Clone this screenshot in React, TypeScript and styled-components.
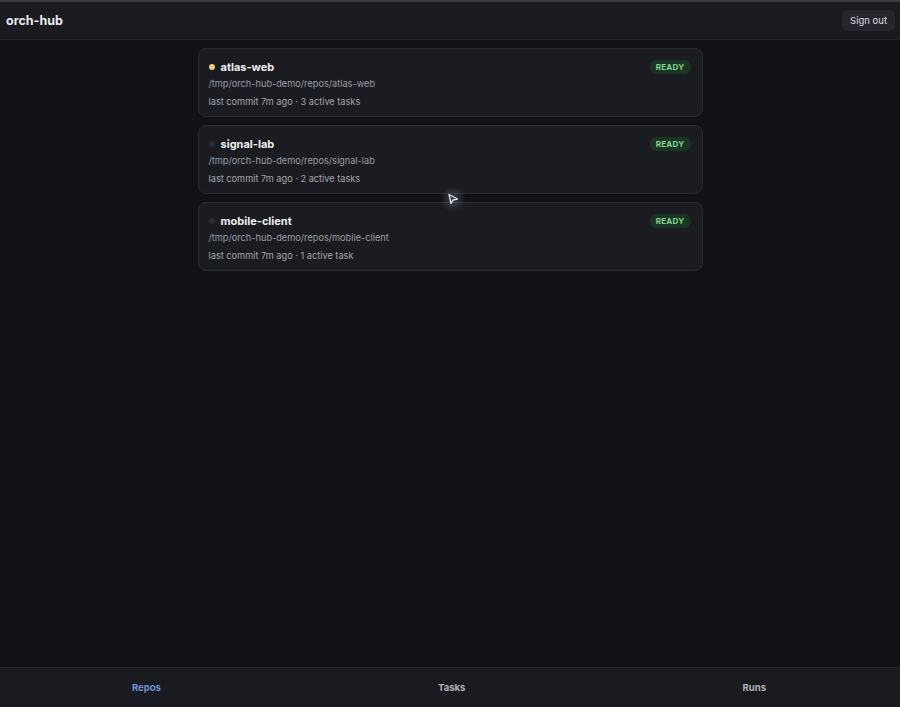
import React from 'react';
import styled, { createGlobalStyle } from 'styled-components';

const GlobalStyle = createGlobalStyle`
  html, body {
    margin: 0;
    padding: 0;
    background: #111217;
  }
  body {
    font-family: Inter, "Liberation Sans", Arial, sans-serif;
    color: #e6e7ea;
  }
  * {
    box-sizing: border-box;
  }
`;

const Page = styled.div`
  position: relative;
  display: flex;
  flex-direction: column;
  min-height: 100vh;
  height: 707px;
  border-top: 2px solid #3a3b41;
`;

const Header = styled.header`
  display: flex;
  align-items: center;
  justify-content: space-between;
  height: 38px;
  padding: 0 5px 0 6px;
  background: #1a1b21;
  border-bottom: 1px solid #26272d;
`;

const Brand = styled.h1`
  margin: 0;
  font-size: 12.5px;
  font-weight: 700;
  color: #e8e9ec;
`;

const SignOut = styled.button`
  height: 21px;
  padding: 0 8px;
  border: none;
  border-radius: 6px;
  background: #26272d;
  color: #dcdde1;
  font-family: inherit;
  font-size: 9.5px;
`;

const Main = styled.main`
  flex: 1;
  display: flex;
  flex-direction: column;
  align-items: center;
  gap: 8px;
  padding-top: 8px;
`;

const Card = styled.div`
  width: 505px;
  height: 69px;
  padding: 10px 11px 0 10px;
  background: #1b1c22;
  border: 1px solid #2b2c32;
  border-radius: 8px;
`;

const TopRow = styled.div`
  display: flex;
  align-items: center;
  justify-content: space-between;
  height: 15px;
`;

const NameWrap = styled.div`
  display: flex;
  align-items: center;
  gap: 6px;
`;

const Dot = styled.span<{ $active?: boolean }>`
  width: 6px;
  height: 6px;
  border-radius: 50%;
  background: ${(p) => (p.$active ? '#f1cf6b' : '#2c2d33')};
`;

const Name = styled.span`
  font-size: 11px;
  font-weight: 700;
  color: #eceef1;
`;

const Badge = styled.span`
  padding: 2px 6px;
  border-radius: 7px;
  background: #1a3522;
  color: #82d594;
  font-size: 8px;
  font-weight: 700;
  letter-spacing: 0.3px;
`;

const Path = styled.div`
  margin-top: 4px;
  font-size: 9.2px;
  color: #9a9ca3;
`;

const Meta = styled.div`
  margin-top: 7px;
  font-size: 9.2px;
  color: #a3a5ac;
`;

const Nav = styled.nav`
  display: flex;
  align-items: center;
  justify-content: space-between;
  height: 40px;
  padding: 0 134px 0 132px;
  background: #1a1b21;
  border-top: 1px solid #26272d;
`;

const Tab = styled.div<{ $active?: boolean }>`
  font-size: 9.5px;
  font-weight: 700;
  color: ${(p) => (p.$active ? '#6f92d4' : '#afb1b8')};
`;

const Pointer = styled.div`
  position: absolute;
  left: 440px;
  top: 184px;
  width: 26px;
  height: 26px;
  border-radius: 50%;
  background: radial-gradient(circle, rgba(170, 180, 210, 0.28) 0%, rgba(170, 180, 210, 0) 70%);
  display: flex;
  align-items: center;
  justify-content: center;
`;

const repos = [
  { name: 'atlas-web', tasks: '3 active tasks', active: true },
  { name: 'signal-lab', tasks: '2 active tasks' },
  { name: 'mobile-client', tasks: '1 active task' },
];

export default function App() {
  return (
    <>
      <GlobalStyle />
      <Page>
        <Header>
          <Brand>orch-hub</Brand>
          <SignOut>Sign out</SignOut>
        </Header>
        <Main>
          {repos.map((r) => (
            <Card key={r.name}>
              <TopRow>
                <NameWrap>
                  <Dot $active={r.active} />
                  <Name>{r.name}</Name>
                </NameWrap>
                <Badge>READY</Badge>
              </TopRow>
              <Path>/tmp/orch-hub-demo/repos/{r.name}</Path>
              <Meta>last commit 7m ago · {r.tasks}</Meta>
            </Card>
          ))}
        </Main>
        <Nav>
          <Tab $active>Repos</Tab>
          <Tab>Tasks</Tab>
          <Tab>Runs</Tab>
        </Nav>
        <Pointer>
          <svg width="12" height="12" viewBox="0 0 12 12">
            <path d="M2 1.5 L10.5 6 L6 7 L4 10.5 Z" fill="#3a3c44" stroke="#d8dae0" strokeWidth="1.4" strokeLinejoin="round" />
          </svg>
        </Pointer>
      </Page>
    </>
  );
}
